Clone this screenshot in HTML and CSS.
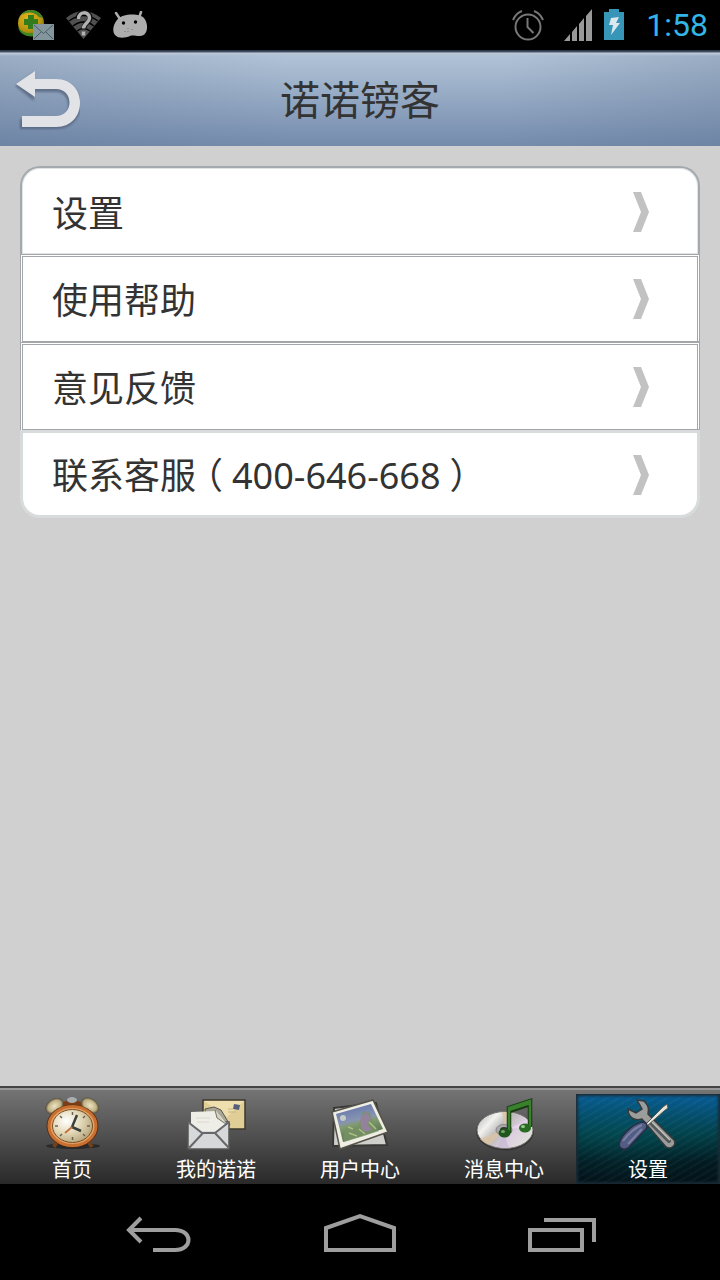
FILE: index.html
```html
<!DOCTYPE html>
<html lang="zh-CN">
<head>
<meta charset="utf-8">
<meta name="viewport" content="width=device-width, initial-scale=1">
<title>诺诺镑客</title>
<link rel="stylesheet" href="styles.css">
</head>
<body>
<div class="screen">
  <div class="status">
    <div class="status-group notices">
      <svg width="36" height="32" viewBox="0 0 36 32" aria-hidden="true">
        <defs><radialGradient id="globe" cx=".4" cy=".3" r=".8"><stop offset="0" stop-color="#e3b51f"/><stop offset=".6" stop-color="#b99510"/><stop offset="1" stop-color="#4c6b14"/></radialGradient></defs>
        <circle cx="13" cy="14" r="13" fill="url(#globe)"/>
        <path d="M3 6C8-1 20-1 25 9l-4-1C17 3 10 2 3 6ZM0 18c4 6 10 7 16 6l2 3C8 29 1 24 0 18Z" fill="#3d8424"/>
        <path d="M10 6h6v4h4v6h-4v4h-6v-4H6v-6h4Z" fill="#347b1c"/>
        <path d="M15 15h21v16H15Z" fill="#83959d"/>
        <path d="m16 16 9.500 8.500L35 16M16 30l7-7m12 7-7-7" fill="none" stroke="#4c5c65"/>
      </svg>
      <svg width="35" height="30" viewBox="0 0 35 30" aria-hidden="true">
        <path d="M0 8Q17-6 35 8L17.500 29Z" fill="#505050"/>
        <path d="M3 11q14.500-11 29 0M7 16q10.500-8 21 0M11 21q6.500-5 13 0" fill="none" stroke="#000" stroke-width="1.500"/>
        <path d="M12 9c0-9 12-9 12-1 0 5-6 4-6 10" fill="none" stroke="#111" stroke-width="5"/>
        <path d="M12.500 9c0-8 11-8 11-1 0 5-6 5-6 10.500M17.500 21.500v4" fill="none" stroke="#b2b2b2" stroke-width="3.500"/>
      </svg>
      <svg width="35" height="28" viewBox="0 0 35 28" aria-hidden="true">
        <path d="m7 8-4-6m23 5 2-6" stroke="#adadad" stroke-width="2.500" stroke-linecap="round"/>
        <path d="M4 9C9 2 27 2 31 7c5 6 4 18-4 18-5 0-7-1-10 0-5 2-11 3-15-1-3-4-2-10 2-15Z" fill="#adadad"/>
        <circle cx="10.500" cy="12" r="1.700"/><circle cx="22.500" cy="11" r="1.700"/>
        <path d="M15 17v1m0 2v1m4-3v1m-7 1v1" stroke="#777"/>
      </svg>
    </div>
    <div class="status-group">
      <svg class="alarm" width="32" height="32" viewBox="0 0 32 32" aria-hidden="true">
        <g fill="none" stroke="#777" stroke-width="2"><circle cx="16" cy="18" r="12.500"/><path d="M15.500 9v9l6 6M1 11q3-7 9-9M31 11q-3-7-9-9"/></g>
      </svg>
      <svg width="28" height="32" viewBox="0 0 28 32" aria-hidden="true">
        <path d="m0 32 6-7v7ZM8 23l5-6v15H8ZM15 15l5-6v23h-5ZM22 7l6-7v32h-6Z" fill="#999"/>
      </svg>
      <svg width="20" height="32" viewBox="0 0 20 32" aria-hidden="true">
        <path d="M0 3h5V0h10v3h5v28H0Z" fill="#3795b8"/><path d="m7 9 8-1-3 6h4L7 26l2-10H5Z" fill="#dce8ee"/>
      </svg>
      <span class="time">1:58</span>
    </div>
  </div>

  <header class="header">
    <button class="back" type="button" aria-label="返回">
      <svg width="66" height="64" viewBox="0 0 66 64" aria-hidden="true">
        <defs><filter id="soft" x="-10%" y="-10%" width="120%" height="120%"><feGaussianBlur stdDeviation="1"/></filter></defs>
        <path d="M1 17 20 3v9h22c33 0 33 48 0 48H6V50h36c16 0 16-27 0-27H20v9Z" fill="#455269" opacity=".6" filter="url(#soft)"/>
        <path d="M2 15 21 2v8h21c32 0 32 48 0 48H8V47h34c18 0 18-27 0-27H21v8Z" fill="#e2e3e7"/>
      </svg>
    </button>
    <h1 class="title">诺诺镑客</h1>
  </header>

  <main class="content">
    <ul class="menu">
      <li><a class="row first" href="#settings">设置<svg class="chevron" width="20" height="42" viewBox="0 0 20 42" aria-hidden="true"><path d="M2 1h8l8 20-8 20H2l8-20Z"/></svg></a></li>
      <li><a class="row middle" href="#help">使用帮助<svg class="chevron" width="20" height="42" viewBox="0 0 20 42" aria-hidden="true"><path d="M2 1h8l8 20-8 20H2l8-20Z"/></svg></a></li>
      <li><a class="row middle" href="#feedback">意见反馈<svg class="chevron" width="20" height="42" viewBox="0 0 20 42" aria-hidden="true"><path d="M2 1h8l8 20-8 20H2l8-20Z"/></svg></a></li>
      <li><a class="row last" href="tel:400646668"><span>联系客服<span class="paren">（</span><span class="phone">400-646-668</span><span class="paren">）</span></span><svg class="chevron" width="20" height="42" viewBox="0 0 20 42" aria-hidden="true"><path d="M2 1h8l8 20-8 20H2l8-20Z"/></svg></a></li>
    </ul>
  </main>

  <nav class="tabs">
    <a class="tab" href="#home">
      <svg width="64" height="56" viewBox="0 0 64 56" aria-hidden="true">
        <defs><radialGradient id="face" cx=".35" cy=".35" r=".7"><stop offset="0" stop-color="#fff"/><stop offset=".5" stop-color="#e5dbbb"/><stop offset="1" stop-color="#b8a77d"/></radialGradient>
        <radialGradient id="bell"><stop offset="0" stop-color="#eee4c4"/><stop offset=".7" stop-color="#c1b285"/><stop offset="1" stop-color="#4e4837"/></radialGradient></defs>
        <ellipse cx="33" cy="50" rx="27" ry="3" fill="#222" opacity=".8"/>
        <path d="m17 45-3 6m34-6 4 6" stroke="#70401f" stroke-width="4"/>
        <path d="M22 10q10-6 20 0" fill="none" stroke="#7b3e19" stroke-width="6"/>
        <ellipse cx="32" cy="4" rx="5" ry="3" fill="#a8adb0"/>
        <ellipse cx="14.500" cy="10" rx="10" ry="7" transform="rotate(-35 14.500 10)" fill="url(#bell)"/>
        <ellipse cx="50" cy="9.500" rx="10" ry="7" transform="rotate(35 50 9.500)" fill="url(#bell)"/>
        <ellipse cx="32.500" cy="30" rx="26" ry="21.500" fill="#5b2c12"/>
        <ellipse cx="32.500" cy="30" rx="23.500" ry="19.500" fill="#e6a066" stroke="#c87030" stroke-width="3"/>
        <ellipse cx="32.500" cy="30" rx="20" ry="16.500" fill="url(#face)" stroke="#775027"/>
        <path d="M32.500 16v3m0 22v3M15 30h3m29 0h3M20 20l2 2m23-2-2 2M20 40l2-2m23 2-2-2" stroke="#6b6455" stroke-width="1.500"/>
        <path d="m37 19-5 12 9 4" fill="none" stroke="#3a403e" stroke-width="2.500"/><path d="m32 31-7 6" stroke="#c6713f" stroke-width="2"/>
      </svg>
      <span class="tab-label">首页</span>
    </a>
    <a class="tab" href="#mine">
      <svg width="64" height="56" viewBox="0 0 64 56" aria-hidden="true">
        <path d="M19 4h42v29H19Z" fill="#e1ce97" stroke="#3c382e" stroke-width="1.500"/>
        <path d="M20 5h40L43 21Z" fill="#efdfaf"/><path d="m50 8 6 1-1 5-6-1Z" fill="#555f7c"/><path d="M44 13h5m-5 3h8" stroke="#c4b483"/>
        <path d="m21 13 9-2 7 3 9 15H22Z" fill="#aaa694" stroke="#555" />
        <path d="M4 26h41v27H4Z" fill="#d7d8d9" stroke="#555" stroke-width="1.500"/>
        <path d="m7 16 25-1 10 12-9 8H18L7 28Z" fill="#efeee6"/><path d="m31 14 2 8 9 6" fill="#d4d0c2" stroke="#77736a"/>
        <path d="M12 22h14M13 26h12" stroke="#d8d7cf"/>
        <path d="m4 26 14 11h13l14-11M5 52l14-15m12 0 14 15" fill="none" stroke="#66686b" stroke-width="2"/>
      </svg>
      <span class="tab-label">我的诺诺</span>
    </a>
    <a class="tab" href="#user">
      <svg width="64" height="56" viewBox="0 0 64 56" aria-hidden="true">
        <defs><linearGradient id="photo" x2=".3" y2="1"><stop offset="0" stop-color="#5c6fa9"/><stop offset=".5" stop-color="#8794b2"/><stop offset=".6" stop-color="#819b70"/><stop offset="1" stop-color="#526e48"/></linearGradient></defs>
        <path d="m6 12 42-5 11 42-54 1Z" fill="#cfd0cc" stroke="#393936" stroke-width="2"/>
        <path d="M4 16 45 4l15 32-48 17Z" fill="#efeee4" stroke="#555248" stroke-width="1.500"/>
        <path d="m8 18 35-10 12 25-40 13Z" fill="url(#photo)"/>
        <path d="m15 41 5-11 6 4 5-5 4-14 7 2 4 12 5 6-15 5-20 6Z" fill="#789167" opacity=".8"/>
        <path d="m32 23 6-7 5 6-4 6 5 6-8 2-3-6Z" fill="#94829d"/><circle cx="15" cy="22" r="3" fill="#c5cbc7"/>
        <path d="m20 31 5 2m6 0 6 5m-16-1 8 3m12-14 7 7" stroke="#a9be82" stroke-width="1.500"/>
      </svg>
      <span class="tab-label">用户中心</span>
    </a>
    <a class="tab" href="#messages">
      <svg width="64" height="56" viewBox="0 0 64 56" aria-hidden="true">
        <defs><linearGradient id="disc" x2="1" y2=".6"><stop offset="0" stop-color="#aaa"/><stop offset=".3" stop-color="#f2f2ef"/><stop offset=".5" stop-color="#bbb9b8"/><stop offset=".75" stop-color="#ddd0e1"/><stop offset="1" stop-color="#dfdfda"/></linearGradient></defs>
        <ellipse cx="33" cy="35" rx="29" ry="19.500" fill="#333"/>
        <ellipse cx="33" cy="34" rx="28" ry="18.500" fill="url(#disc)" stroke="#77746f"/>
        <path d="M31 34 8 43q5 5 10 6ZM33 32l-3-16h8Z" fill="#dcc3a5" opacity=".8"/>
        <path d="m37 33 20-10 3 7Z" fill="#ead2ef"/><path d="m32 38-7 13 12 1Z" fill="#c8b8d6" opacity=".7"/>
        <ellipse cx="32" cy="34" rx="8" ry="5.500" fill="#aaa" stroke="#888"/><ellipse cx="32" cy="34" rx="4" ry="3" fill="#333"/>
        <path d="M37 37V12l21-7v26M37 15l21-7" fill="none" stroke="#173a12" stroke-width="4.500"/>
        <path d="M37 37V12l21-7v26M37 14l21-7" fill="none" stroke="#39812c" stroke-width="2.500"/>
        <ellipse cx="32.500" cy="37" rx="6" ry="4.500" fill="#1e561b"/><ellipse cx="53" cy="32" rx="6" ry="4.500" fill="#286b22"/>
        <ellipse cx="31" cy="35.500" rx="2" ry="1.500" fill="#78a46e"/><ellipse cx="51" cy="30.500" rx="2" ry="1.500" fill="#9dc78e"/>
      </svg>
      <span class="tab-label">消息中心</span>
    </a>
    <a class="tab selected" href="#settings-tab" aria-current="page">
      <svg width="64" height="56" viewBox="0 0 64 56" aria-hidden="true">
        <path d="m21 4 7 1c5 5 5 8 4 13l26 26c3 5-3 10-8 7L26 23c-7 2-14-1-14-10l8 4 6-4Z" fill="#9b9d9c" stroke="#35393a" stroke-width="1.500"/>
        <path d="m35 27 18 18" stroke="#555a5a" stroke-width="4" stroke-linecap="round"/><path d="m36 26 18 18" stroke="#c8c9c5" stroke-width="1.500"/>
        <path d="m30 28 17-17 4-3 1 4-4 3-17 15Z" fill="#e6e5dc" stroke="#555753"/>
        <path d="M28 26c3 1 4 4 2 7L13 51c-5 5-12 1-9-6 4-9 15-19 24-19Z" fill="#535c83" stroke="#272d43" stroke-width="1.500"/>
        <path d="M7 45q9-12 19-16M12 48l14-15" fill="none" stroke="#7881a4" stroke-width="2"/>
      </svg>
      <span class="tab-label">设置</span>
    </a>
  </nav>

  <div class="system">
    <button class="key" type="button" aria-label="后退"><svg width="72" height="40" viewBox="0 0 72 40" aria-hidden="true"><path d="M7 18h46c18 0 18 20 0 20H31M19 6 7 18l12 12" fill="none" stroke="#9e9e9e" stroke-width="4"/></svg></button>
    <button class="key" type="button" aria-label="主屏幕"><svg width="72" height="40" viewBox="0 0 72 40" aria-hidden="true"><path d="M2 38V16L36 4l34 12v22Z" fill="none" stroke="#9e9e9e" stroke-width="4"/></svg></button>
    <button class="key" type="button" aria-label="最近任务"><svg width="72" height="40" viewBox="0 0 72 40" aria-hidden="true"><path d="M4 18h52v20H4ZM18 8h50v22" fill="none" stroke="#9e9e9e" stroke-width="4"/></svg></button>
  </div>
</div>
</body>
</html>
```
FILE: styles.css
```css
* {
  box-sizing: border-box;
}

body {
  margin: 0;
  background: #d0d0d0;
  font-family: Roboto, "Noto Sans CJK SC", sans-serif;
  color: #333;
}

svg {
  display: block;
  flex: none;
}

a {
  color: inherit;
  text-decoration: none;
}

button {
  padding: 0;
  border: 0;
  background: none;
}

.screen {
  display: flex;
  flex-direction: column;
  min-height: 100vh;
}

.status {
  display: flex;
  align-items: center;
  justify-content: space-between;
  height: 50px;
  padding: 0 12px 0 18px;
  background: #000;
}

.status-group {
  display: flex;
  align-items: center;
  gap: 12px;
}

.notices {
  gap: 12px;
}

.alarm {
  margin-right: 8px;
}

.time {
  margin-left: 10px;
  font-size: 32px;
  line-height: 40px;
  color: #33b5e5;
}

.header {
  display: grid;
  grid-template-columns: 80px 1fr 80px;
  align-items: center;
  height: 96px;
  padding-top: 6px;
  background:
    linear-gradient(#222b3a 0, #4a586e 2px, #c1cbd9 3px, #b5c3d4 4px, transparent 6px),
    linear-gradient(90deg, #5c718f44, transparent 40%, transparent 70%, #5c718f44),
    linear-gradient(#b4c6d9, #748bad);
}

.back {
  padding-left: 14px;
  cursor: pointer;
}

.title {
  margin: 0;
  padding-top: 2px;
  font-size: 40px;
  font-weight: 400;
  line-height: 56px;
  text-align: center;
}

.content {
  flex: 1;
  padding: 20px;
}

.menu {
  margin: 0;
  padding: 0;
  list-style: none;
}

.row {
  display: flex;
  align-items: center;
  justify-content: space-between;
  height: 88px;
  padding: 0 46px 2px 29px;
  border: 3px double #a3a6aa;
  background: #fff;
  font-family: "Noto Sans CJK SC", sans-serif;
  font-size: 36px;
  line-height: 52px;
}

.first {
  padding: 0 47px 0 30px;
  border: 2px solid #a3a9ad;
  border-bottom: 0;
  border-radius: 20px 20px 0 0;
  box-shadow: inset 0 0 0 1px #dfe3e4;
}

.middle {
  border-bottom: 1px solid #a3a6aa;
}

.last {
  padding-bottom: 0;
  border: 3px solid #d8dbdc;
  border-radius: 0 0 20px 20px;
}

.paren {
  display: inline-block;
  width: 36px;
  text-align: center;
  font-feature-settings: "halt";
}

.phone {
  font-family: "Noto Sans", sans-serif;
}

.chevron {
  margin-top: 2px;
  fill: #c2c2c2;
}

.tabs {
  display: grid;
  grid-template-columns: repeat(5, 1fr);
  height: 98px;
  padding-top: 8px;
  background: linear-gradient(#444 0, #444 2px, #999 2px, #999 4px, #747474 4px, #292929);
}

.tab {
  display: flex;
  flex-direction: column;
  align-items: center;
  gap: 4px;
  padding-top: 2px;
  font-size: 20px;
  line-height: 28px;
  color: #fff;
}

.selected {
  background:
    repeating-linear-gradient(150deg, #ffffff08 0, #ffffff08 2px, transparent 2px, transparent 6px),
    radial-gradient(ellipse at 35% 45%, #00606044, transparent 70%),
    linear-gradient(#075e99, #023f48 45%, #021b22 75%, #031218);
  box-shadow: inset 0 0 3px 2px #1b2c36;
}

.system {
  display: flex;
  align-items: center;
  justify-content: space-between;
  height: 96px;
  padding: 0 17%;
  background: #000;
}

.key {
  cursor: pointer;
}
```
